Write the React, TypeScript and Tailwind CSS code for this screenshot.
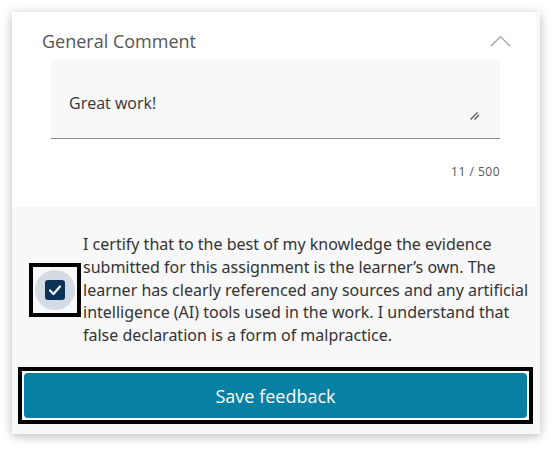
import React from "react";

export default function App() {
  return (
    <div className="w-[558px] h-[452px] bg-white pt-[12px] pl-[12px]" style={{ fontFamily: '"Open Sans", "Noto Sans", sans-serif' }}>
      <div className="w-[528px] h-[422px] bg-[#f8f8f8] shadow-[0_2px_10px_rgba(0,0,0,0.28)] flex flex-col">
        <div className="w-[524px] h-[195px] bg-white flex flex-col">
          <div className="flex items-center justify-between pl-[30px] pr-[25px] pt-[17px] h-[41px]">
            <span className="text-[18px] leading-[24px] text-[#555]">General Comment</span>
            <svg width="21" height="12" viewBox="0 0 21 12" className="-mt-[1px]">
              <polyline points="1,11 10.5,1.5 20,11" fill="none" stroke="#999" strokeWidth="1.2" />
            </svg>
          </div>
          <div className="ml-[39px] mt-[6px] w-[449px] h-[80px] bg-[#f8f8f8] rounded-t-[6px] border-b border-[#8a8a8a] relative">
            <div className="pl-[18px] pt-[32px] text-[16px] leading-[24px] text-[#333]">Great work!</div>
            <svg width="12" height="12" viewBox="0 0 12 12" className="absolute right-[19px] bottom-[17px]">
              <line x1="1.5" y1="10.5" x2="8.5" y2="3.5" stroke="#555" strokeWidth="1.2" />
              <line x1="5.5" y1="10.5" x2="10" y2="6" stroke="#555" strokeWidth="1.2" />
            </svg>
          </div>
          <div className="ml-[39px] w-[449px] text-right mt-[25px] text-[12px] leading-[16px] tracking-[0.5px] text-[#555]">11 / 500</div>
        </div>
        <div className="flex items-center mt-[26px] pl-[17px]">
          <div className="w-[52px] h-[54px] border-[4px] border-black flex items-center justify-center shrink-0">
            <div className="w-[40px] h-[40px] rounded-full bg-[#d5dbe2] flex items-center justify-center">
              <div className="w-[20px] h-[20px] rounded-[3px] bg-[#0b3257] flex items-center justify-center">
                <svg width="14" height="12" viewBox="0 0 14 12">
                  <polyline points="2,6.5 5.5,10 12,2.5" fill="none" stroke="white" strokeWidth="2.2" strokeLinecap="round" strokeLinejoin="round" />
                </svg>
              </div>
            </div>
          </div>
          <p className="ml-[2px] w-[446px] text-[16px] leading-[22.75px] text-[#333]" style={{ fontFamily: '"Noto Sans", "Open Sans", sans-serif' }}>
            I certify that to the best of my knowledge the evidence submitted for this assignment is the learner’s own. The learner has clearly referenced any sources and any artificial intelligence (AI) tools used in the work. I understand that false declaration is a form of malpractice.
          </p>
        </div>
        <div className="mt-auto mb-[10px] ml-[6px] w-[515px] h-[57px] border-[4px] border-black bg-white p-[2px]">
          <button className="w-full h-full rounded-[4px] bg-[#0880a4] text-white text-[18px] leading-[24px]">Save feedback</button>
        </div>
      </div>
    </div>
  );
}
